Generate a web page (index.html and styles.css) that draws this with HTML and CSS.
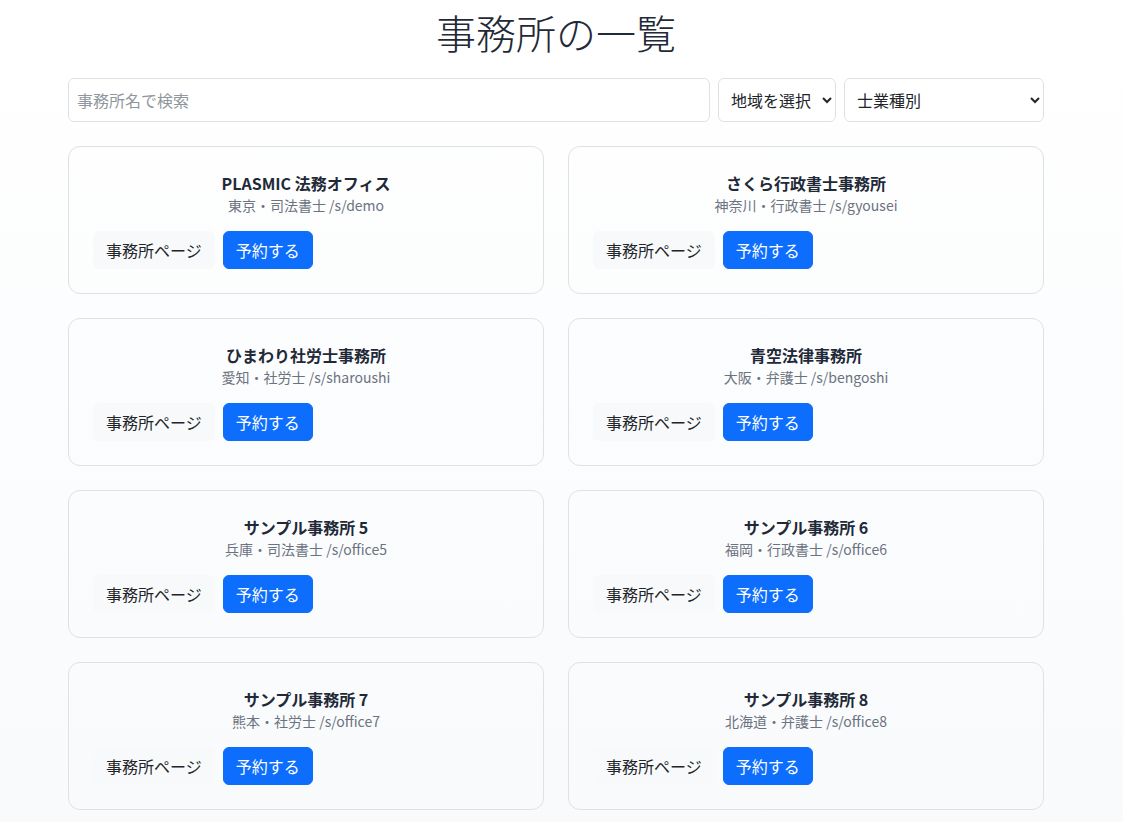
FILE: index.html
```html
<!DOCTYPE html>
<html lang="ja">
<head>
<meta charset="utf-8">
<title>事務所の一覧</title>
<link rel="stylesheet" href="styles.css">
</head>
<body>
<main class="page">
  <h1 class="page-title">事務所の一覧</h1>
  <div class="filters">
    <input class="search" type="text" placeholder="事務所名で検索">
    <select class="select select-region">
      <option>地域を選択</option>
    </select>
    <select class="select select-type">
      <option>士業種別</option>
    </select>
  </div>
  <div class="grid">
    <div class="card">
      <div class="card-title">PLASMIC 法務オフィス</div>
      <div class="card-sub">東京・司法書士 /s/demo</div>
      <div class="actions"><a class="btn btn-light">事務所ページ</a><a class="btn btn-primary">予約する</a></div>
    </div>
    <div class="card">
      <div class="card-title">さくら行政書士事務所</div>
      <div class="card-sub">神奈川・行政書士 /s/gyousei</div>
      <div class="actions"><a class="btn btn-light">事務所ページ</a><a class="btn btn-primary">予約する</a></div>
    </div>
    <div class="card">
      <div class="card-title">ひまわり社労士事務所</div>
      <div class="card-sub">愛知・社労士 /s/sharoushi</div>
      <div class="actions"><a class="btn btn-light">事務所ページ</a><a class="btn btn-primary">予約する</a></div>
    </div>
    <div class="card">
      <div class="card-title">青空法律事務所</div>
      <div class="card-sub">大阪・弁護士 /s/bengoshi</div>
      <div class="actions"><a class="btn btn-light">事務所ページ</a><a class="btn btn-primary">予約する</a></div>
    </div>
    <div class="card">
      <div class="card-title">サンプル事務所 5</div>
      <div class="card-sub">兵庫・司法書士 /s/office5</div>
      <div class="actions"><a class="btn btn-light">事務所ページ</a><a class="btn btn-primary">予約する</a></div>
    </div>
    <div class="card">
      <div class="card-title">サンプル事務所 6</div>
      <div class="card-sub">福岡・行政書士 /s/office6</div>
      <div class="actions"><a class="btn btn-light">事務所ページ</a><a class="btn btn-primary">予約する</a></div>
    </div>
    <div class="card">
      <div class="card-title">サンプル事務所 7</div>
      <div class="card-sub">熊本・社労士 /s/office7</div>
      <div class="actions"><a class="btn btn-light">事務所ページ</a><a class="btn btn-primary">予約する</a></div>
    </div>
    <div class="card">
      <div class="card-title">サンプル事務所 8</div>
      <div class="card-sub">北海道・弁護士 /s/office8</div>
      <div class="actions"><a class="btn btn-light">事務所ページ</a><a class="btn btn-primary">予約する</a></div>
    </div>
  </div>
</main>
</body>
</html>
```

FILE: styles.css
```css
html, body {
  margin: 0;
  padding: 0;
}
body {
  font-family: "Noto Sans CJK JP", "Noto Sans", sans-serif;
  color: #212529;
  background: linear-gradient(180deg, #ffffff 0%, #f8fafc 100%);
  min-height: 822px;
}
.page {
  width: 976px;
  margin-left: 68px;
  padding-top: 8px;
}
.page-title {
  margin: 0 0 22px;
  font-size: 40px;
  line-height: 48px;
  font-weight: 300;
  text-align: center;
  color: #1f2937;
}
.filters {
  display: flex;
  gap: 8px;
  margin-bottom: 24px;
}
.search, .select {
  height: 44px;
  box-sizing: border-box;
  border: 1px solid #dee2e6;
  border-radius: 6px;
  background-color: #fff;
  font-family: inherit;
  font-size: 16px;
  color: #212529;
  outline: none;
}
.search {
  flex: 1;
  padding: 0 8px;
}
.search::placeholder {
  color: #8f969d;
}
.select {
  padding: 0 6px 0 8px;
}
.select-region { width: 118px; }
.select-type { width: 200px; }
.grid {
  display: grid;
  grid-template-columns: 1fr 1fr;
  gap: 24px;
}
.card {
  border: 1px solid #dee2e6;
  border-radius: 12px;
  padding: 24px;
  text-align: center;
}
.card-title {
  font-size: 16px;
  line-height: 24px;
  font-weight: 700;
  color: #1f2937;
}
.card-sub {
  font-size: 14px;
  line-height: 21px;
  color: #6b7280;
  margin-bottom: 15px;
}
.actions {
  display: flex;
  gap: 8px;
}
.btn {
  display: inline-block;
  box-sizing: border-box;
  height: 38px;
  padding: 6px 12px;
  border: 1px solid transparent;
  border-radius: 6px;
  font-size: 16px;
  line-height: 24px;
  text-decoration: none;
  cursor: pointer;
}
.btn-light {
  background: #f8f9fa;
  border-color: #f8f9fa;
  color: #212529;
}
.btn-primary {
  background: #0d6efd;
  border-color: #0d6efd;
  color: #fff;
}
```
